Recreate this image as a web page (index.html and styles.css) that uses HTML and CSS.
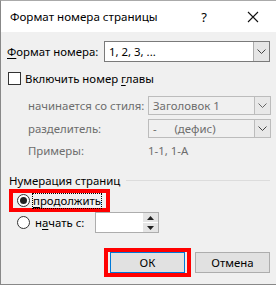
FILE: index.html
```html
<!DOCTYPE html>
<html lang="ru">
<head>
  <meta charset="UTF-8" />
  <title>Формат номера страницы</title>
  <link rel="stylesheet" href="styles.css">
</head>
<body>
  <div class="ventana">
    <div class="titulo">
      <span class="titulo-texto">Формат номера страницы</span>
      <span class="ayuda">?</span>
      <svg class="cerrar" width="12" height="12" viewBox="0 0 12 12">
        <path d="M1 1L11 11M11 1L1 11" stroke="#111" stroke-width="1.1" fill="none"/>
      </svg>
    </div>

    <div class="cuerpo">
      <div class="fila fila-formato">
        <label class="etiqueta"><u>Ф</u>ормат номера:</label>
        <div class="combo combo-ancho">
          <span class="combo-valor">1, 2, 3, ...</span>
          <span class="combo-boton">
            <svg width="9" height="5" viewBox="0 0 9 5"><path d="M0.5 0.5L4.5 4.5L8.5 0.5" stroke="#444" fill="none"/></svg>
          </span>
        </div>
      </div>

      <div class="fila fila-check">
        <span class="casilla"></span>
        <span>Включить номер <u>г</u>лавы</span>
      </div>

      <div class="fila fila-sub fila-estilo">
        <span class="etiqueta-sub">начинается со стиля:</span>
        <div class="combo combo-gris">
          <span class="combo-valor">Заголовок 1</span>
          <span class="combo-boton">
            <svg width="9" height="5" viewBox="0 0 9 5"><path d="M0.5 0.5L4.5 4.5L8.5 0.5" stroke="#666" fill="none"/></svg>
          </span>
        </div>
      </div>

      <div class="fila fila-sub fila-separador">
        <span class="etiqueta-sub">разделитель:</span>
        <div class="combo combo-gris">
          <span class="combo-valor">-&nbsp;&nbsp;&nbsp;&nbsp;&nbsp;&nbsp;(дефис)</span>
          <span class="combo-boton">
            <svg width="9" height="5" viewBox="0 0 9 5"><path d="M0.5 0.5L4.5 4.5L8.5 0.5" stroke="#444" fill="none"/></svg>
          </span>
        </div>
      </div>

      <div class="fila fila-sub fila-ejemplos">
        <span class="etiqueta-sub">Примеры:</span>
        <span class="ejemplos-valor">1-1, 1-A</span>
      </div>

      <div class="grupo-titulo">
        <span>Нумерация страниц</span>
        <span class="grupo-linea"></span>
      </div>

      <div class="marco-rojo marco-continuar">
        <span class="radio radio-activo"></span>
        <span class="foco"><u>п</u>родолжить</span>
      </div>

      <div class="fila fila-iniciar">
        <span class="radio"></span>
        <span class="iniciar-texto">н<u>а</u>чать с:</span>
        <div class="contador">
          <span class="contador-campo"></span>
          <span class="contador-flechas">
            <span class="flecha">
              <svg width="7" height="4" viewBox="0 0 7 4"><path d="M0 4L3.5 0L7 4Z" fill="#222"/></svg>
            </span>
            <span class="flecha">
              <svg width="7" height="4" viewBox="0 0 7 4"><path d="M0 0L3.5 4L7 0Z" fill="#222"/></svg>
            </span>
          </span>
        </div>
      </div>

      <div class="botones">
        <div class="marco-rojo marco-ok">
          <button type="button" class="btn btn-ok">ОК</button>
        </div>
        <button type="button" class="btn btn-cancelar">Отмена</button>
      </div>
    </div>
  </div>
</body>
</html>
```

FILE: styles.css
```css
body {
  margin: 0;
  font-family: "Segoe UI", "Noto Sans", Arial, sans-serif;
  font-size: 11.4px;
  color: #000;
  background: #fff;
}
u {
  text-decoration: underline;
  text-underline-offset: 2px;
}
.ventana {
  width: 276px;
  height: 285px;
  box-sizing: border-box;
  border-top: 1px solid #aaa;
  border-left: 1px solid #888;
  border-bottom: 1px solid #888;
  background: #f0f0f0;
  overflow: hidden;
  white-space: nowrap;
}
.titulo {
  height: 31px;
  background: #fff;
  display: flex;
  align-items: center;
  padding-left: 9px;
}
.titulo-texto {
  flex: 1;
  font-size: 11.6px;
}
.ayuda {
  width: 14px;
  text-align: center;
  margin-right: 36px;
  font-size: 13px;
}
.cerrar {
  margin-right: 17px;
}
.cuerpo {
  padding: 9px 0 0 6px;
}
.fila {
  display: flex;
  align-items: center;
}
.fila-formato {
  height: 21px;
}
.etiqueta {
  width: 97px;
}
.combo {
  display: flex;
  box-sizing: border-box;
  border: 1px solid #7a7a7a;
  background: #fff;
}
.combo-ancho {
  width: 166px;
  height: 21px;
}
.combo-valor {
  flex: 1;
  padding-left: 4px;
  line-height: 19px;
}
.combo-boton {
  width: 16px;
  box-sizing: border-box;
  border-left: 1px solid #adadad;
  background: #e5e5e5;
  display: flex;
  align-items: center;
  justify-content: center;
}
.fila-check {
  margin-top: 10px;
  height: 13px;
}
.casilla {
  width: 13px;
  height: 13px;
  box-sizing: border-box;
  border: 1px solid #333;
  background: #fff;
  margin: 0 4px 0 1px;
}
.fila-sub {
  padding-left: 21px;
  color: #6d6d6d;
}
.etiqueta-sub {
  width: 120px;
}
.fila-estilo {
  margin-top: 11px;
}
.fila-separador {
  margin-top: 4px;
}
.combo-gris {
  width: 123px;
  height: 19px;
  border-color: #bcbcbc;
  background: #f0f0f0;
}
.combo-gris .combo-valor {
  line-height: 17px;
}
.combo-gris .combo-boton {
  border-left-color: #bcbcbc;
  background: #e8e8e8;
}
.fila-ejemplos {
  margin-top: 4px;
  height: 16px;
}
.grupo-titulo {
  display: flex;
  align-items: center;
  height: 16px;
  margin-top: 14px;
  padding-left: 2px;
  color: #000;
}
.grupo-linea {
  flex: 1;
  height: 1px;
  background: #dcdcdc;
  margin: 1px 6px 0 6px;
}
.marco-rojo {
  border: 4px solid #f00;
  box-sizing: border-box;
}
.marco-continuar {
  display: flex;
  align-items: center;
  width: 101px;
  height: 23px;
  margin-top: 1px;
  margin-left: 2px;
  padding-left: 4px;
  background: #f0f0f0;
}
.radio {
  width: 13px;
  height: 13px;
  box-sizing: border-box;
  border: 1px solid #333;
  border-radius: 50%;
  background: #fff;
  position: relative;
  flex: none;
}
.radio-activo::after {
  content: "";
  position: absolute;
  left: 2px;
  top: 2px;
  width: 7px;
  height: 7px;
  border-radius: 50%;
  background: #222;
}
.foco {
  margin-left: 3px;
  outline: 1px dotted #000;
  line-height: 14px;
}
.fila-iniciar {
  height: 21px;
  padding-left: 10px;
}
.iniciar-texto {
  margin-left: 5px;
  width: 60px;
}
.contador {
  display: flex;
  width: 64px;
  height: 21px;
  box-sizing: border-box;
  border: 1px solid #adadad;
  background: #fff;
}
.contador-campo {
  flex: 1;
}
.contador-flechas {
  width: 15px;
  display: flex;
  flex-direction: column;
  gap: 1px;
  background: #fff;
}
.flecha {
  flex: 1;
  background: #e5e5e5;
  display: flex;
  align-items: center;
  justify-content: center;
}
.botones {
  display: flex;
  align-items: center;
  margin-top: 15px;
  padding-left: 97px;
}
.marco-ok {
  width: 87px;
  height: 29px;
  padding: 0 2px;
  display: flex;
  align-items: center;
}
.btn {
  font-family: "Segoe UI", "Noto Sans", Arial, sans-serif;
  font-size: 11.4px;
  height: 21px;
  padding: 0;
  box-sizing: border-box;
  background: #e1e1e1;
  border: 1px solid #adadad;
  color: #000;
}
.btn-ok {
  width: 100%;
  border: 1px solid #0078d7;
}
.btn-cancelar {
  width: 75px;
  margin-left: 4px;
}
```
